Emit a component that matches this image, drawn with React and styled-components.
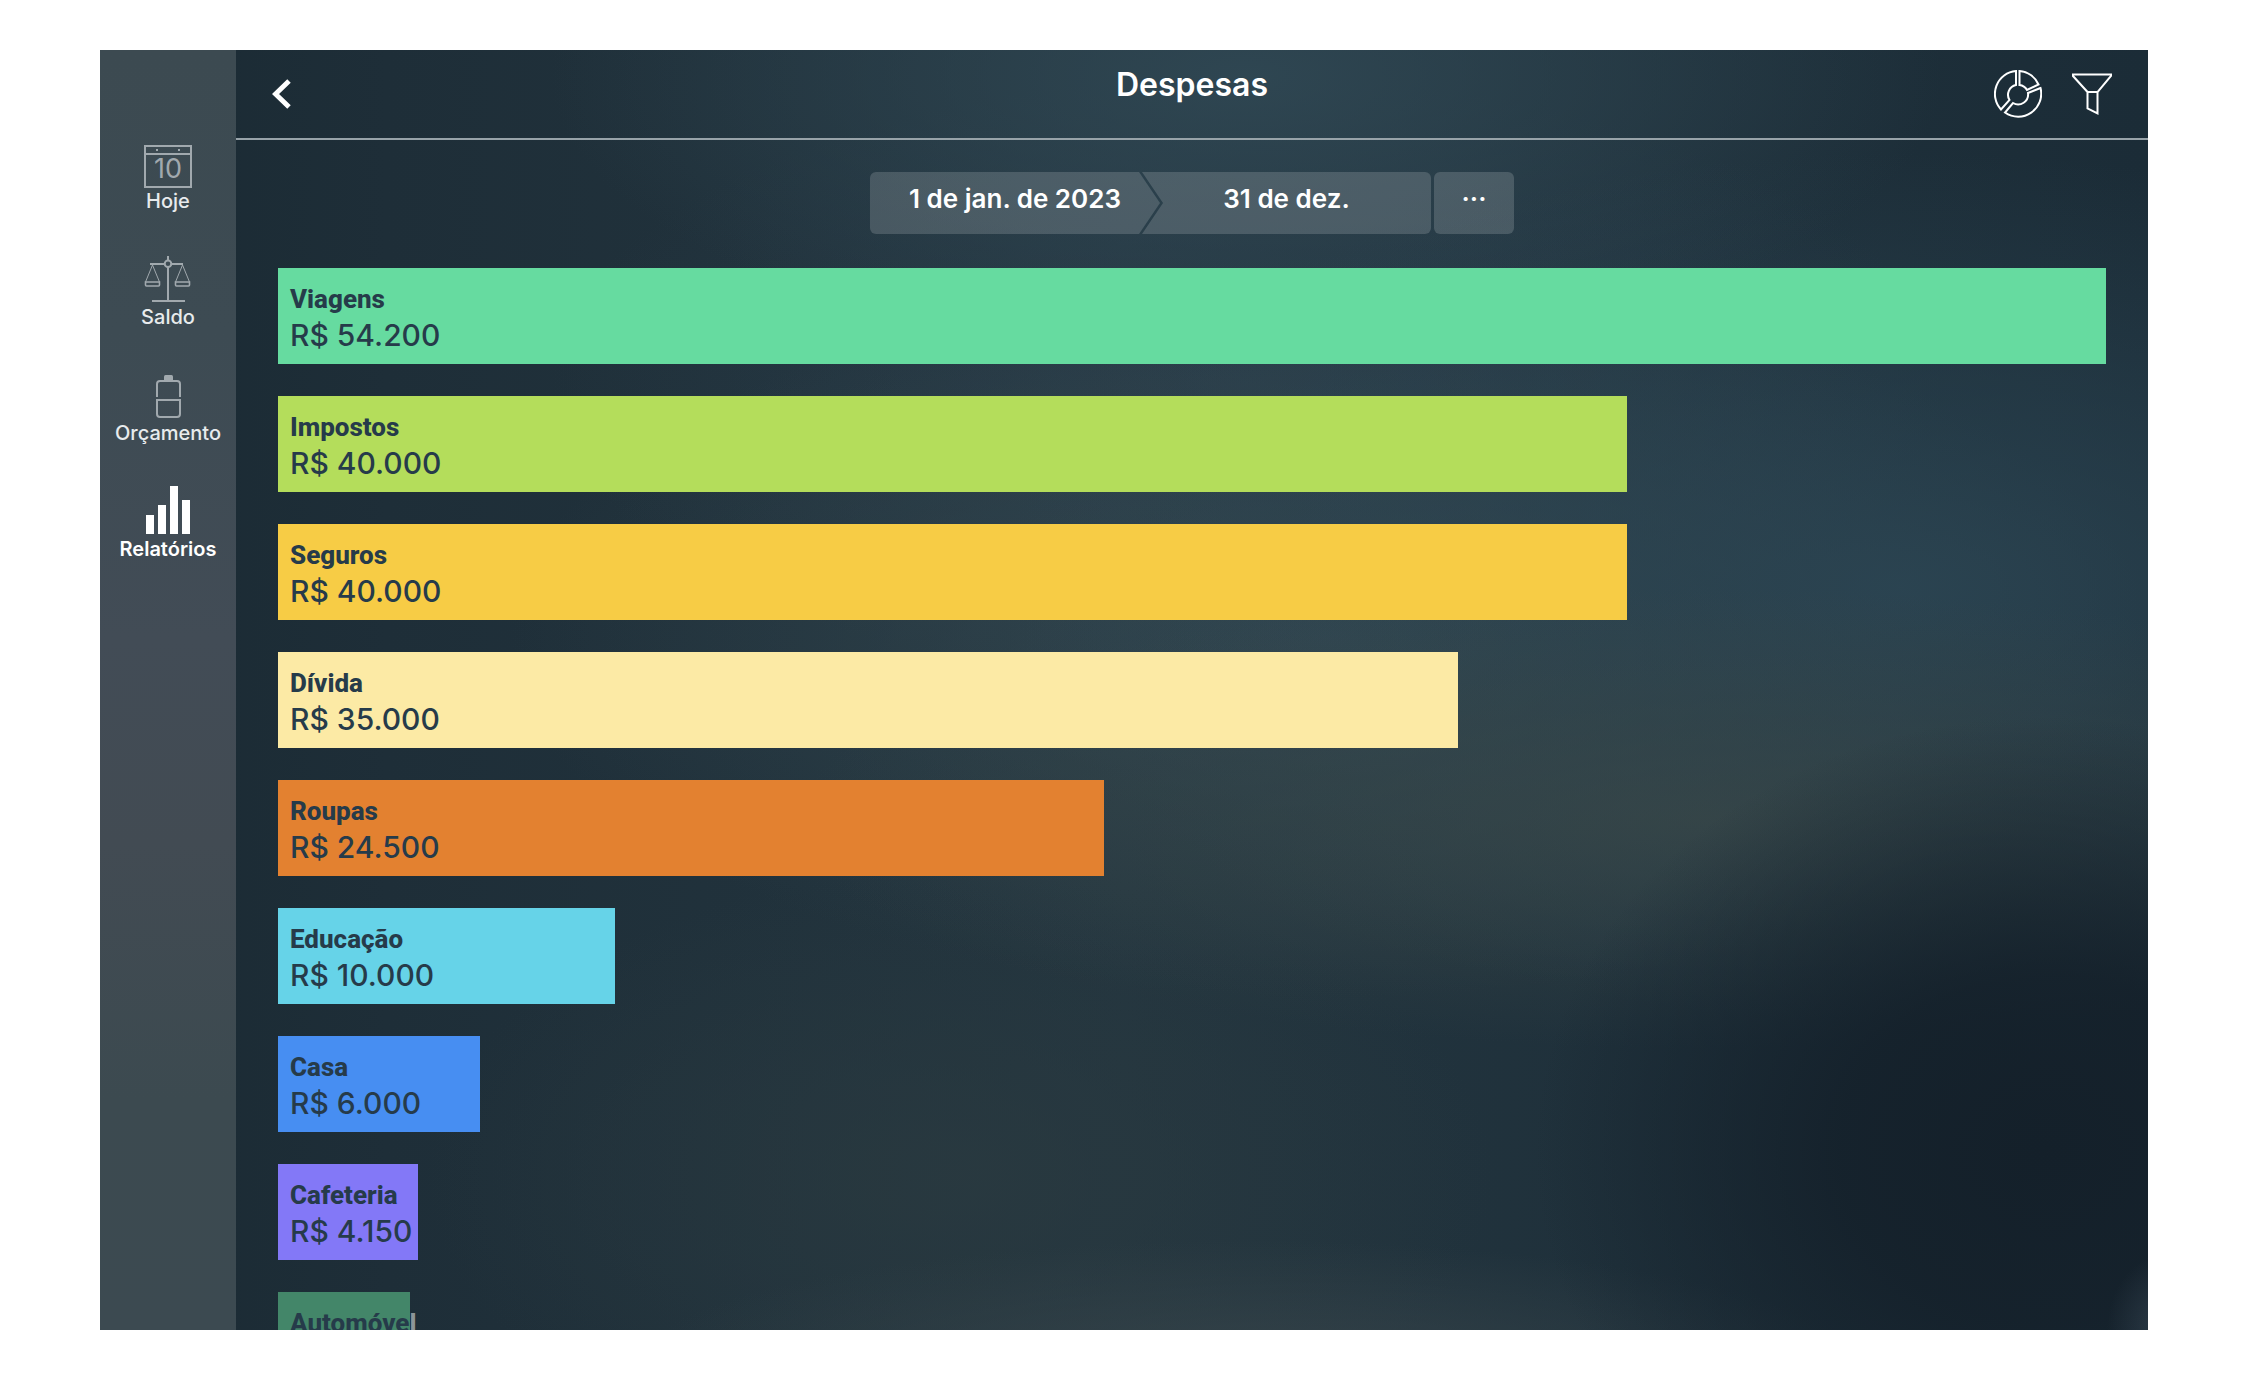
import React from "react";
import styled, { createGlobalStyle, css } from "styled-components";

const GlobalStyle = createGlobalStyle`
    * {
        box-sizing: border-box;
    }
    body {
        margin: 0;
        background: #ffffff;
        font-family: Inter, "Liberation Sans", sans-serif;
        -webkit-font-smoothing: antialiased;
    }
    button, a {
        font: inherit;
        color: inherit;
        text-decoration: none;
    }
    svg {
        display: block;
    }
`

const Page = styled.div`
    height: 100vh;
    padding: 50px 100px;
`

const Shell = styled.div`
    display: flex;
    height: 100%;
    overflow: hidden;
    background:
        radial-gradient(ellipse 3% 6% at 101% 100%, rgba(62,78,92,0.6) 0%, rgba(62,78,92,0) 100%),
        radial-gradient(ellipse 25% 34% at 95% 86%, #14202a 0%, rgba(20,32,42,0.85) 40%, rgba(20,32,42,0) 100%),
        radial-gradient(ellipse 30% 10% at 56% 103%, rgba(54,68,74,0.9) 0%, rgba(54,68,74,0) 100%),
        radial-gradient(ellipse 26% 24% at 42% 88%, rgba(42,58,64,0.8) 0%, rgba(42,58,64,0) 100%),
        radial-gradient(ellipse 44% 18% at 78% 60%, rgba(58,72,72,0.7) 0%, rgba(58,72,72,0) 100%),
        radial-gradient(ellipse 44% 34% at 88% 42%, rgba(44,70,84,0.85) 0%, rgba(44,70,84,0) 100%),
        radial-gradient(ellipse 40% 28% at 60% 46%, rgba(54,74,82,0.8) 0%, rgba(54,74,82,0) 100%),
        radial-gradient(ellipse 34% 22% at 56% 2%, rgba(48,72,84,0.9) 0%, rgba(48,72,84,0) 100%),
        radial-gradient(ellipse 34% 24% at 56% 26%, rgba(46,66,80,0.6) 0%, rgba(46,66,80,0) 100%),
        linear-gradient(90deg, #1a2a33 0%, #1e2e38 14%, #23353f 50%, #1b2c37 100%);
`

const Sidebar = styled.nav`
    display: flex;
    flex-direction: column;
    align-items: stretch;
    gap: 38px;
    flex: 0 0 136px;
    padding-top: 88px;
    background: linear-gradient(180deg, #3c4a51 0%, #3d4b53 22%, #424c56 46%, #424b53 62%, #3c4a50 82%, #3c4a51 100%);
`

const NavItem = styled.a`
    display: flex;
    flex-direction: column;
    align-items: center;
    font-size: 20px;
    line-height: 30px;
    font-weight: ${props => props.$active ? 600 : 500};
    color: ${props => props.$active ? "#ffffff" : "#e8ebed"};
    svg {
        width: 48px;
        height: 48px;
        overflow: visible;
        fill: none;
        stroke: #a1a9ae;
        stroke-width: 2;
    }
`

const Main = styled.main`
    display: flex;
    flex-direction: column;
    flex: 1;
    min-width: 0;
`

const Header = styled.header`
    display: grid;
    grid-template-columns: 1fr auto 1fr;
    height: 90px;
    flex: none;
    padding: 0 36px;
    border-bottom: 2px solid #98a3a9;
`

const Title = styled.h1`
    margin: 0;
    padding-top: 14px;
    font-size: 32px;
    line-height: 42px;
    font-weight: 600;
    color: #ffffff;
`

const Actions = styled.div`
    display: flex;
    align-items: center;
    gap: 30px;
    justify-content: ${props => props.$end ? "flex-end" : "flex-start"};
`

const IconButton = styled.button`
    padding: 0;
    border: none;
    background: none;
    color: #ffffff;
    cursor: pointer;
    svg {
        fill: none;
        stroke: currentColor;
        stroke-width: 2;
    }
`

const Period = styled.div`
    display: flex;
    justify-content: center;
    padding: 32px 0 34px;
`

const arrow = {
    start: css`
        width: 290px;
        border-radius: 6px 0 0 6px;
        clip-path: polygon(0 0, calc(100% - 21px) 0, 100% 50%, calc(100% - 21px) 100%, 0 100%);
    `,
    end: css`
        width: 289px;
        margin-left: -18px;
        border-radius: 0 6px 6px 0;
        clip-path: polygon(0 0, 100% 0, 100% 100%, 0 100%, 21px 50%);
    `,
    more: css`
        width: 80px;
        margin-left: 3px;
        border-radius: 6px;
    `,
}

const PeriodButton = styled.button`
    height: 62px;
    padding: 0 0 8px;
    border: none;
    background: rgba(255,255,255,0.16);
    font-size: 26px;
    line-height: 32px;
    font-weight: 600;
    color: #ffffff;
    cursor: pointer;
    ${props => arrow[props.$kind]}
`

const Bars = styled.ul`
    display: flex;
    flex-direction: column;
    gap: 32px;
    margin: 0;
    padding: 0 42px;
    list-style: none;
`

const Bar = styled.li`
    height: 96px;
    flex: none;
    padding: 12px;
    background: ${props => props.$color};
    color: #263b4a;
    white-space: nowrap;
`

const Name = styled.div`
    width: max-content;
    font-family: Roboto, "Liberation Sans", sans-serif;
    font-size: 26px;
    line-height: 38px;
    font-weight: 800;
`

const Overflow = styled.span`
    color: #8d959a;
`

const Amount = styled.div`
    font-size: 30px;
    line-height: 34px;
    font-weight: 500;
`

const navItems = [
    {
        label: "Hoje",
        icon: (
            <svg viewBox="0 0 48 48">
                <rect x="1" y="8" width="46" height="41" />
                <path d="M1 16H47" />
                <path d="M12 12h2M34 12h2" />
                <text x="24" y="40" textAnchor="middle" fontSize="27" fontWeight="400" fill="#a1a9ae" stroke="none">10</text>
            </svg>
        ),
    },
    {
        label: "Saldo",
        icon: (
            <svg viewBox="0 0 48 48">
                <path d="M24 2V6M24 13V47M8 47H41M6 10H20.500M27.500 10H39" />
                <circle cx="24" cy="9.700" r="3.300" />
                <path d="M8.500 11L1.500 28M8.500 11L15.500 28M38.500 11L31.500 28M38.500 11L45.500 28" strokeWidth="1" />
                <path d="M1.500 28H15.500V31Q15.500 32 14.500 32H2.500Q1.500 32 1.500 31ZM31.500 28H45.500V31Q45.500 32 44.500 32H32.500Q31.500 32 31.500 31Z" strokeWidth="1.600" />
            </svg>
        ),
    },
    {
        label: "Orçamento",
        icon: (
            <svg viewBox="0 0 48 48">
                <path d="M20 10V6.500Q20 5 21.500 5H27.500Q29 5 29 6.500V10Z" fill="#a1a9ae" stroke="none" />
                <path d="M13 27V14Q13 11 16 11H33Q36 11 36 14V27" />
                <path d="M12 30H37M13 30V44Q13 47 16 47H33Q36 47 36 44V30" />
            </svg>
        ),
    },
    {
        label: "Relatórios",
        active: true,
        icon: (
            <svg viewBox="0 0 48 48">
                <path d="M2 29h8v19h-8zM14 19h8v29h-8zM26 0h8v48h-8zM38 14h8v34h-8z" fill="#ffffff" stroke="none" />
            </svg>
        ),
    },
]

const expenses = [
    { name: "Viagens", value: 54200, color: "#66dba0" },
    { name: "Impostos", value: 40000, color: "#b4dd5b" },
    { name: "Seguros", value: 40000, color: "#f7cc45" },
    { name: "Dívida", value: 35000, color: "#fceaa5" },
    { name: "Roupas", value: 24500, color: "#e38130" },
    { name: "Educação", value: 10000, color: "#66d3e8" },
    { name: "Casa", value: 6000, color: "#478ef2" },
    { name: "Cafeteria", value: 4150, color: "#8378f7" },
    { name: "Automóve", rest: "l", value: 3900, color: "#438669" },
]

const max = expenses[0].value

const formatValue = value => "R$ " + String(value).replace(/(\d{3})$/, ".$1")

function App(){
    return (
        <>
            <GlobalStyle />
            <Page>
                <Shell>
                    <Sidebar>
                        {navItems.map(item => (
                            <NavItem href="#" key={item.label} $active={item.active}>
                                {item.icon}
                                {item.label}
                            </NavItem>
                        ))}
                    </Sidebar>
                    <Main>
                        <Header>
                            <Actions>
                                <IconButton aria-label="Voltar">
                                    <svg width="20" height="32" viewBox="0 0 20 32">
                                        <path d="M17 3L3.500 16L17 29" strokeWidth="5" />
                                    </svg>
                                </IconButton>
                            </Actions>
                            <Title>Despesas</Title>
                            <Actions $end>
                                <IconButton aria-label="Gráfico">
                                    <svg width="48" height="48" viewBox="0 0 48 48">
                                        <path d="M22 1V15A10 10 0 0 0 15.500 30L7 39.500A23 23 0 0 1 22 1Z" />
                                        <path d="M25.500 1V15A10 10 0 0 1 33 20L44.500 14.500A23 23 0 0 0 25.500 1Z" />
                                        <path d="M46.500 18L34 23A10 10 0 0 1 19 33L11 42.500A23 23 0 0 0 46.500 18Z" />
                                    </svg>
                                </IconButton>
                                <IconButton aria-label="Filtrar">
                                    <svg width="40" height="44" viewBox="0 0 40 44">
                                        <path d="M1 2.500H39V4L25.500 20V41.500L15.500 36.500V20L1 4ZM15.500 20H25.500" />
                                    </svg>
                                </IconButton>
                            </Actions>
                        </Header>
                        <Period>
                            <PeriodButton $kind="start">1 de jan. de 2023</PeriodButton>
                            <PeriodButton $kind="end">31 de dez.</PeriodButton>
                            <PeriodButton $kind="more" aria-label="Mais">···</PeriodButton>
                        </Period>
                        <Bars>
                            {expenses.map(item => (
                                <Bar key={item.name} $color={item.color} style={{ width: `${item.value / max * 100}%` }}>
                                    <Name>{item.name}{item.rest && <Overflow>{item.rest}</Overflow>}</Name>
                                    <Amount>{formatValue(item.value)}</Amount>
                                </Bar>
                            ))}
                        </Bars>
                    </Main>
                </Shell>
            </Page>
        </>
    )
}


export default App;
